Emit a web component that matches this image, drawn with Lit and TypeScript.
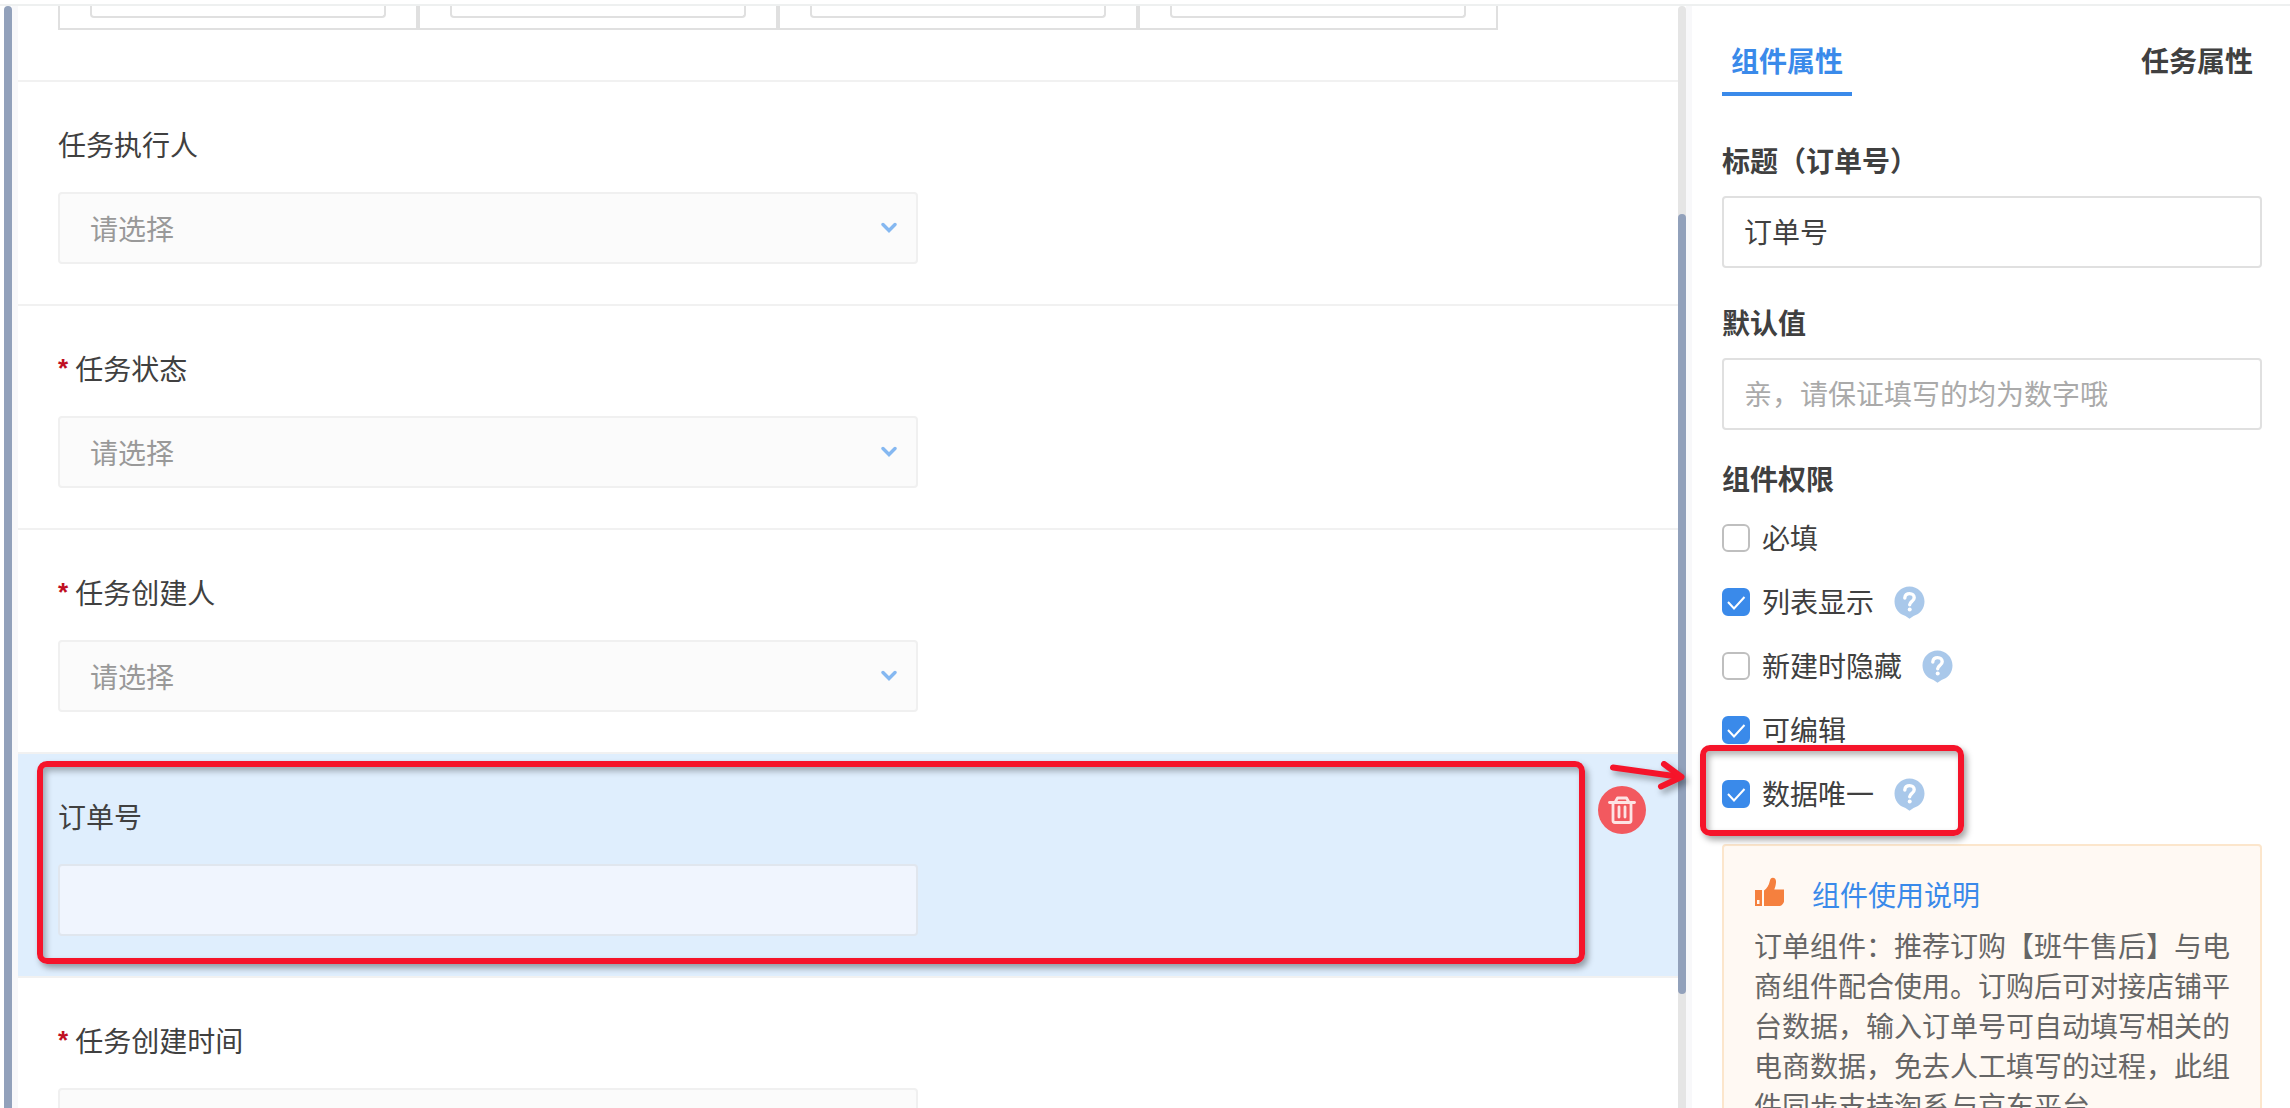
import { LitElement, html, css, svg, nothing } from "lit";
import { customElement, state } from "lit/decorators.js";
import { classMap } from "lit/directives/class-map.js";

interface FormRow {
  id: string;
  label: string;
  required: boolean;
  kind: "select" | "text";
}

interface Permission {
  id: string;
  label: string;
  checked: boolean;
  help: boolean;
}

const ROWS: FormRow[] = [
  { id: "executor", label: "任务执行人", required: false, kind: "select" },
  { id: "status", label: "任务状态", required: true, kind: "select" },
  { id: "creator", label: "任务创建人", required: true, kind: "select" },
  { id: "order", label: "订单号", required: false, kind: "text" },
  { id: "created", label: "任务创建时间", required: true, kind: "text" },
];

const helpIcon = svg`
  <svg width="31" height="33" viewBox="0 0 31 33" aria-hidden="true">
    <path d="M15.500 0.500C7.200 0.500 0.500 7.200 0.500 15.500C0.500 22.500 5 28 11.500 30L15.500 32.800L19.500 30C26 28 30.500 22.500 30.500 15.500C30.500 7.200 23.800 0.500 15.500 0.500Z" fill="#a9c8ea"/>
    <path d="M10.800 12C10.800 9 13 7.600 15.600 7.600C18.300 7.600 20.200 9.300 20.200 11.700C20.200 13.600 19 14.600 17.700 15.600C16.400 16.600 15.700 17.300 15.700 18.800" fill="none" stroke="#fff" stroke-width="3.400" stroke-linecap="round"/>
    <circle cx="15.700" cy="23.400" r="2" fill="#fff"/>
  </svg>`;

const chevron = svg`
  <svg class="chevron" width="16" height="12" viewBox="0 0 16 12" aria-hidden="true">
    <path d="M2 2.500L8 8.500L14 2.500" fill="none" stroke="#85b8f1" stroke-width="3.400" stroke-linecap="round"/>
  </svg>`;

const trash = svg`
  <svg width="48" height="48" viewBox="0 0 48 48" aria-hidden="true">
    <circle cx="24" cy="24" r="24" fill="#f2595f"/>
    <g fill="none" stroke="#fde3e4" stroke-width="2.800" stroke-linejoin="round" stroke-linecap="round">
      <path d="M11.500 16.500H36.500"/>
      <path d="M17.500 15.500L19.500 12H28.500L30.500 15.500"/>
      <path d="M15 17V34.500Q15 36.500 17 36.500H31Q33 36.500 33 34.500V17"/>
      <path d="M21 21V31M27 21V31"/>
    </g>
  </svg>`;

const thumb = svg`
  <svg class="thumb-up" width="30" height="30" viewBox="0 0 30 30" aria-hidden="true">
    <path fill="#f5803e" fill-rule="evenodd" d="M1 13H8V29H1ZM3 23V27H5.500V23Z"/>
    <path fill="#f5803e" d="M10 13.500C13 11.500 15 8 15.800 4C16.300 1.800 17.300 0.800 18.800 0.800C21 0.800 22.300 2.800 22 5.500C21.800 8.500 21 10.500 20.300 12.500H30V24.500C30 26 27.500 29 26 29H10Z"/>
  </svg>`;

@customElement("app-root")
export class AppRoot extends LitElement {
  @state() private selected = "order";

  @state() private permissions: Permission[] = [
    { id: "required", label: "必填", checked: false, help: false },
    { id: "listed", label: "列表显示", checked: true, help: true },
    { id: "hidden", label: "新建时隐藏", checked: false, help: true },
    { id: "editable", label: "可编辑", checked: true, help: false },
    { id: "unique", label: "数据唯一", checked: true, help: true },
  ];

  static styles = css`
    :host {
      display: flex;
      flex-direction: column;
      height: 100vh;
      overflow: hidden;
      background: #fff;
      color: #404040;
      font-family: "Noto Sans CJK SC", "Liberation Sans", sans-serif;
      font-size: 28px;
      line-height: 40px;
    }
    * {
      box-sizing: border-box;
    }
    button,
    input,
    select {
      font: inherit;
      color: inherit;
      margin: 0;
    }
    .topbar {
      flex: none;
      height: 6px;
      border-bottom: 2px solid #eef0f0;
    }
    .workspace {
      flex: 1;
      min-height: 0;
      display: flex;
      padding-left: 4px;
      overflow: hidden;
    }
    .bar {
      flex: none;
      width: 8px;
      background: #e5e5e5;
      border-radius: 4px 4px 0 0;
    }
    .thumb {
      background: #92a1bb;
      border-radius: 4px;
    }
    .bar.full {
      background: #92a1bb;
    }
    .bar.partial {
      display: grid;
      grid-template-rows: 208fr 780fr 114fr;
    }
    .bar.partial .thumb {
      grid-row: 2;
    }
    .gutter {
      flex: none;
      width: 6px;
      background: #f8f8fa;
    }
    .canvas {
      flex: 1;
      min-width: 0;
    }
    .grid-row {
      height: 76px;
      padding-left: 40px;
      border-bottom: 2px solid #f1f1f1;
    }
    .cells {
      display: flex;
    }
    .cell {
      width: 360px;
      height: 24px;
      padding: 0 30px 10px;
      border: 2px solid #e0e0e0;
      border-top: 0;
    }
    .cell input {
      display: block;
      width: 100%;
      height: 12px;
      padding: 0;
      border: 2px solid #e0e0e0;
      border-top: 0;
      border-radius: 0 0 4px 4px;
      outline: 0;
    }
    .row {
      position: relative;
      padding: 42px 40px 40px;
      border-bottom: 2px solid #f1f1f1;
    }
    .row.active {
      background: #dfeefd;
    }
    .row-label {
      display: flex;
      gap: 7px;
      margin-bottom: 28px;
    }
    .star {
      color: #c00f23;
      font-family: "Liberation Sans", sans-serif;
      font-size: 26px;
      font-weight: 700;
    }
    .control {
      display: grid;
      align-items: center;
      width: 860px;
      max-width: 100%;
    }
    .control > * {
      grid-area: 1 / 1;
    }
    .field {
      width: 100%;
      height: 72px;
      padding: 0 30px;
      border: 2px solid #f0f0f0;
      border-radius: 4px;
      background: #fbfbfb;
      color: #999;
      appearance: none;
      outline: 0;
    }
    .active .field {
      background: #f0f5fe;
      border-color: #e0e6ee;
    }
    .chevron {
      justify-self: end;
      margin-right: 21px;
      pointer-events: none;
    }
    .remove {
      position: absolute;
      top: 32px;
      right: 32px;
      display: flex;
      padding: 0;
      border: 0;
      background: none;
      border-radius: 50%;
    }
    .mark {
      position: absolute;
      border: 6px solid #f5142a;
      border-radius: 10px;
      box-shadow: 3px 4px 6px rgba(0, 0, 0, 0.35), inset 3px 4px 6px rgba(0, 0, 0, 0.3);
      pointer-events: none;
    }
    .mark.on-row {
      inset: 7px 93px 12px 19px;
    }
    .mark.on-option {
      inset: -29px -39px -22px -22px;
    }
    .arrow {
      position: absolute;
      top: 4px;
      right: -16px;
      z-index: 2;
      filter: drop-shadow(3px 4px 3px rgba(0, 0, 0, 0.35));
      pointer-events: none;
    }
    .panel {
      flex: none;
      width: 598px;
      padding: 32px 28px 0 30px;
    }
    .tabs {
      display: flex;
      justify-content: space-between;
      margin-bottom: 44px;
    }
    .tab {
      padding: 2px 9px 12px;
      border: 0;
      border-bottom: 4px solid transparent;
      background: none;
      font-weight: 700;
    }
    .tab.current {
      color: #3a8aea;
      border-color: #3a8aea;
    }
    .heading {
      display: block;
      margin: 0 0 16px;
      font-size: 28px;
      font-weight: 700;
    }
    .prop {
      display: block;
      width: 100%;
      height: 72px;
      margin-bottom: 34px;
      padding: 0 20px 2px;
      border: 2px solid #e0e0e0;
      border-radius: 4px;
      background: #fff;
      outline: 0;
    }
    .prop::placeholder {
      color: #aaa;
      opacity: 1;
    }
    .permissions {
      margin: -6px 0 20px;
    }
    .options {
      display: flex;
      flex-direction: column;
      align-items: flex-start;
      gap: 24px;
      margin: 0 0 30px;
      padding: 0;
      list-style: none;
    }
    .option {
      position: relative;
      display: flex;
      align-items: center;
      gap: 20px;
      height: 40px;
    }
    .option label {
      display: flex;
      align-items: center;
      gap: 12px;
    }
    .option-text {
      padding-bottom: 2px;
    }
    .check {
      display: grid;
      align-items: center;
      justify-items: center;
    }
    .check > * {
      grid-area: 1 / 1;
    }
    .check input {
      width: 28px;
      height: 28px;
      border: 2px solid #bfbfbf;
      border-radius: 6px;
      background: #fff;
      appearance: none;
    }
    .check input:checked {
      border-color: #3a8aea;
      background: #3a8aea;
    }
    .check svg {
      pointer-events: none;
    }
    .help {
      display: flex;
      padding: 0;
      border: 0;
      background: none;
    }
    .tip {
      padding: 28px 30px;
      border: 2px solid #fce6cc;
      border-radius: 4px;
      background: #fff9f3;
      color: #666;
    }
    .tip-head {
      display: flex;
      align-items: flex-start;
      gap: 28px;
      margin-bottom: 11px;
    }
    .thumb-up {
      margin-top: 3px;
    }
    .tip-head a {
      color: #3a8aea;
      text-decoration: none;
    }
    .tip p {
      margin: 0;
    }
  `;

  private toggle(id: string) {
    this.permissions = this.permissions.map((p) =>
      p.id === id ? { ...p, checked: !p.checked } : p
    );
  }

  private renderRow(row: FormRow) {
    const active = row.id === this.selected;
    return html`
      <section class=${classMap({ row: true, active })} @click=${() => (this.selected = row.id)}>
        <label class="row-label" for=${row.id}>
          ${row.required ? html`<span class="star">*</span>` : nothing}
          <span>${row.label}</span>
        </label>
        <div class="control">
          ${row.kind === "select"
            ? html`<select class="field" id=${row.id}><option>请选择</option></select>${chevron}`
            : html`<input class="field" id=${row.id} type="text" />`}
        </div>
        ${active
          ? html`
              <button class="remove" type="button" aria-label="删除">${trash}</button>
              <div class="mark on-row"></div>
              <svg class="arrow" width="88" height="40" viewBox="0 0 88 40" aria-hidden="true">
                <g fill="none" stroke="#f5142a" stroke-width="6" stroke-linecap="round" stroke-linejoin="round">
                  <path d="M7 9.500L75 19" />
                  <path d="M58 6L75.500 19L55 28.500" />
                </g>
              </svg>
            `
          : nothing}
      </section>
    `;
  }

  private renderPermission(p: Permission) {
    return html`
      <li class="option">
        <label>
          <span class="check">
            <input type="checkbox" .checked=${p.checked} @change=${() => this.toggle(p.id)} />
            ${p.checked
              ? svg`<svg width="20" height="16" viewBox="0 0 20 16" aria-hidden="true"><path d="M2 8L8 14.500L18.500 3" fill="none" stroke="#fff" stroke-width="2"/></svg>`
              : nothing}
          </span>
          <span class="option-text">${p.label}</span>
        </label>
        ${p.help ? html`<button class="help" type="button" aria-label="帮助">${helpIcon}</button>` : nothing}
        ${p.id === "unique" ? html`<div class="mark on-option"></div>` : nothing}
      </li>
    `;
  }

  render() {
    return html`
      <div class="topbar"></div>
      <div class="workspace">
        <div class="bar full"></div>
        <div class="gutter"></div>
        <main class="canvas">
          <div class="grid-row">
            <div class="cells">
              ${[1, 2, 3, 4].map(
                (n) => html`<div class="cell"><input type="text" aria-label="列 ${n}" /></div>`
              )}
            </div>
          </div>
          ${ROWS.map((row) => this.renderRow(row))}
        </main>
        <div class="bar partial"><div class="thumb"></div></div>
        <div class="gutter"></div>
        <aside class="panel">
          <nav class="tabs">
            <button class="tab current" type="button">组件属性</button>
            <button class="tab" type="button">任务属性</button>
          </nav>
          <label class="heading" for="title">标题（订单号）</label>
          <input class="prop" id="title" type="text" value="订单号" />
          <label class="heading" for="default">默认值</label>
          <input class="prop" id="default" type="text" placeholder="亲，请保证填写的均为数字哦" />
          <h3 class="heading permissions">组件权限</h3>
          <ul class="options">
            ${this.permissions.map((p) => this.renderPermission(p))}
          </ul>
          <section class="tip">
            <div class="tip-head">${thumb}<a href="#guide">组件使用说明</a></div>
            <p>
              订单组件：推荐订购【班牛售后】与电商组件配合使用。订购后可对接店铺平台数据，输入订单号可自动填写相关的电商数据，免去人工填写的过程，此组件同步支持淘系与京东平台
            </p>
          </section>
        </aside>
      </div>
    `;
  }
}
